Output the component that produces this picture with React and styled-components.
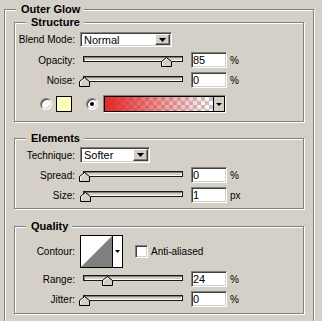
import React from 'react';
import styled, { createGlobalStyle } from 'styled-components';

const Global = createGlobalStyle`
  html, body { margin: 0; padding: 0; background: #d4d0c8; overflow: hidden; }
  body { font-family: "Liberation Sans", Arial, sans-serif; color: #000; }
`;

const Page = styled.div`
  box-sizing: border-box;
  width: 322px;
  height: 321px;
  padding: 9px 0 0 4px;
  overflow: hidden;
`;

const Group = styled.section`
  position: relative;
  box-sizing: border-box;
  width: ${(p) => p.$w}px;
  padding: ${(p) => p.$pad};
  margin-top: ${(p) => p.$mt || 0}px;
  border: 1px solid #808080;
  box-shadow: 1px 1px 0 #fff, inset 1px 1px 0 #fff;
  display: flex;
  flex-direction: column;
`;

const Legend = styled.h2`
  position: absolute;
  left: 11px;
  top: -7px;
  margin: 0;
  padding: 0 4px 0 5px;
  background: #d4d0c8;
  font: bold 11px/13px "Liberation Sans", Arial, sans-serif;
`;

const Row = styled.div`
  display: flex;
  align-items: center;
  height: ${(p) => p.$h || 16}px;
  margin-top: ${(p) => p.$mt || 0}px;
`;

const Label = styled.span`
  flex: none;
  width: 60px;
  margin-right: 5px;
  text-align: right;
  font-size: 10px;
  white-space: nowrap;
`;

const Select = styled.div`
  box-sizing: border-box;
  width: ${(p) => p.$w}px;
  height: ${(p) => p.$h}px;
  display: flex;
  align-items: stretch;
  padding: 1px;
  background: #fff;
  border: 1px solid;
  border-color: #808080 #fff #fff #808080;
  box-shadow: inset 1px 1px 0 #404040, inset -1px -1px 0 #d4d0c8;
`;

const SelectText = styled.span`
  flex: 1;
  display: flex;
  align-items: center;
  padding-left: 2px;
  font-size: 11px;
`;

const DropBtn = styled.span`
  flex: none;
  box-sizing: border-box;
  width: 15px;
  display: flex;
  align-items: center;
  justify-content: center;
  background: #d4d0c8;
  border: 1px solid;
  border-color: #fff #404040 #404040 #fff;
  box-shadow: inset -1px -1px 0 #808080;
`;

const Slider = styled.div`
  position: relative;
  flex: none;
  width: 106px;
  height: 16px;
`;

const Track = styled.div`
  box-sizing: border-box;
  width: 100px;
  height: 6px;
  margin: 4px 0 0 3px;
  background: #d4d0c8;
  border: 1px solid #1a1a1a;
  box-shadow: inset 1px 1px 0 #808080, inset -1px -1px 0 #fff;
`;

const Thumb = styled.svg`
  position: absolute;
  top: 5px;
  display: block;
`;

const Field = styled.div`
  box-sizing: border-box;
  flex: none;
  width: 36px;
  height: 16px;
  margin-left: 5px;
  padding-left: 1px;
  background: #fff;
  border: 1px solid;
  border-color: #808080 #fff #fff #808080;
  box-shadow: inset 1px 1px 0 #404040, inset -1px -1px 0 #d4d0c8;
  font-size: 11px;
  line-height: 14px;
`;

const Unit = styled.span`
  margin-left: 3px;
  font-size: 10px;
`;

const ColorRow = styled.div`
  display: flex;
  align-items: center;
  height: 18px;
  margin-top: 7px;
  padding-left: 25px;
`;

const Radio = styled.span`
  position: relative;
  box-sizing: border-box;
  flex: none;
  width: 12px;
  height: 12px;
  margin-left: ${(p) => p.$ml || 0}px;
  border-radius: 50%;
  background: #fff;
  border: 1px solid;
  border-color: #808080 #fff #fff #808080;
  box-shadow: inset 1px 1px 0 #404040, inset -1px -1px 0 #d4d0c8;
  &::after {
    content: "";
    display: ${(p) => (p.$on ? 'block' : 'none')};
    position: absolute;
    left: 3px;
    top: 3px;
    width: 4px;
    height: 4px;
    border-radius: 50%;
    background: #000;
  }
`;

const Swatch = styled.span`
  box-sizing: border-box;
  flex: none;
  width: 16px;
  height: 16px;
  margin-left: 4px;
  background: #ffffc0;
  border: 1px solid #000;
`;

const GradBox = styled.div`
  box-sizing: border-box;
  flex: none;
  display: flex;
  width: 123px;
  height: 18px;
  margin-left: 5px;
  border: 1px solid;
  border-color: #808080 #fff #fff #808080;
`;

const GradInner = styled.div`
  flex: 1;
  display: flex;
  border: 1px solid #000;
`;

const GradFill = styled.div`
  flex: 1;
  background:
    linear-gradient(to right, #e42626, rgba(228, 38, 38, 0)),
    repeating-conic-gradient(#fff 0 25%, #c8c8c8 0 50%) 0 0 / 8px 8px;
`;

const GradBtn = styled.div`
  flex: none;
  width: 10px;
  display: flex;
  align-items: center;
  justify-content: center;
  background: #d4d0c8;
  border-left: 1px solid #000;
`;

const ContourBox = styled.div`
  box-sizing: border-box;
  flex: none;
  display: flex;
  width: 43px;
  height: 33px;
  background: #fff;
  border: 1px solid #000;
`;

const ContourArrow = styled.div`
  flex: 1;
  display: flex;
  align-items: center;
  justify-content: center;
  border-left: 1px solid #000;
`;

const Check = styled.span`
  box-sizing: border-box;
  flex: none;
  width: 13px;
  height: 13px;
  margin-left: 12px;
  background: #fff;
  border: 1px solid;
  border-color: #808080 #fff #fff #808080;
  box-shadow: inset 1px 1px 0 #404040, inset -1px -1px 0 #d4d0c8;
`;

const CheckText = styled.span`
  margin-left: 3px;
  font-size: 10px;
`;

const Arrow = ({ w = 7 }) => (
  <svg width={w} height={Math.ceil(w / 2)} viewBox={`0 0 ${w} ${Math.ceil(w / 2)}`}>
    <path d={`M0 0 H${w} L${w / 2} ${Math.ceil(w / 2)} Z`} fill="#000" />
  </svg>
);

const SliderRow = ({ label, value, unit = '%', mt }) => (
  <Row $mt={mt}>
    <Label>{label}</Label>
    <Slider>
      <Track />
      <Thumb width="11" height="10" viewBox="0 0 11 10" style={{ left: Math.round(-1 + value * 0.97) }}>
        <path d="M0.5 9.5 V4.5 L5.5 0.5 L10.5 4.5 V9.5 Z" fill="#d4d0c8" stroke="#000" />
        <path d="M1.5 8.5 V5 L5.5 1.8" fill="none" stroke="#fff" />
      </Thumb>
    </Slider>
    <Field>{value}</Field>
    <Unit>{unit}</Unit>
  </Row>
);

export default function App() {
  return (
    <>
      <Global />
      <Page>
        <Group $w={310} $pad="12px 9px 10px 9px">
          <Legend>Outer Glow</Legend>

          <Group $w={290} $pad="9px 0 8px 0">
            <Legend>Structure</Legend>
            <Row $h={15}>
              <Label>Blend Mode:</Label>
              <Select $w={92} $h={15}>
                <SelectText>Normal</SelectText>
                <DropBtn><Arrow /></DropBtn>
              </Select>
            </Row>
            <SliderRow label="Opacity:" value={85} mt={5} />
            <SliderRow label="Noise:" value={0} mt={4} />
            <ColorRow>
              <Radio />
              <Swatch />
              <Radio $on $ml={14} />
              <GradBox>
                <GradInner>
                  <GradFill />
                  <GradBtn><Arrow w={6} /></GradBtn>
                </GradInner>
              </GradBox>
            </ColorRow>
          </Group>

          <Group $w={290} $pad="8px 0 5px 0" $mt={16}>
            <Legend>Elements</Legend>
            <Row>
              <Label>Technique:</Label>
              <Select $w={70} $h={16}>
                <SelectText>Softer</SelectText>
                <DropBtn><Arrow /></DropBtn>
              </Select>
            </Row>
            <SliderRow label="Spread:" value={0} mt={4} />
            <SliderRow label="Size:" value={1} unit="px" mt={4} />
          </Group>

          <Group $w={290} $pad="8px 0 6px 0" $mt={17}>
            <Legend>Quality</Legend>
            <Row $h={33}>
              <Label>Contour:</Label>
              <ContourBox>
                <svg width="31" height="31" viewBox="0 0 31 31">
                  <rect width="31" height="31" fill="#fff" />
                  <path d="M0 31 L31 0 V31 Z" fill="#808080" />
                </svg>
                <ContourArrow><Arrow w={5} /></ContourArrow>
              </ContourBox>
              <Check />
              <CheckText>Anti-aliased</CheckText>
            </Row>
            <SliderRow label="Range:" value={24} mt={3} />
            <SliderRow label="Jitter:" value={0} mt={4} />
          </Group>
        </Group>
      </Page>
    </>
  );
}
